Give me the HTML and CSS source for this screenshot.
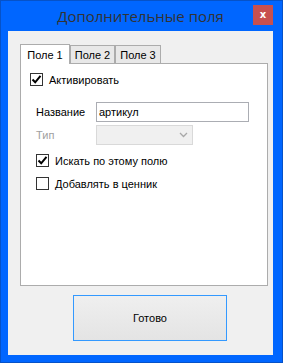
FILE: index.html
```html
<!DOCTYPE html>
<html lang="ru">
<head>
    <meta charset="UTF-8">
    <title>Дополнительные поля</title>
    <link rel="stylesheet" href="styles.css">
</head>
<body>

<div class="window">
    <div class="titlebar">
        <span></span>
        <div class="title">Дополнительные поля</div>
        <button class="close">x</button>
    </div>

    <div class="client">
        <!-- Вкладки -->
        <div class="tabs">
            <div class="tab active">Поле 1</div>
            <div class="tab">Поле 2</div>
            <div class="tab">Поле 3</div>
        </div>

        <div class="panel">
            <label class="check first">
                <span class="box"><svg width="11" height="11" viewBox="0 0 11 11"><path d="M1.5 5.5 L4.2 8.3 L9.5 1.8" fill="none" stroke="#000" stroke-width="2"/></svg></span>
                Активировать
            </label>

            <div class="field name-field">
                <span class="label">Название</span>
                <input class="text" type="text" value="артикул">
            </div>

            <div class="field type-field">
                <span class="label disabled">Тип</span>
                <div class="select">
                    <svg width="9" height="6" viewBox="0 0 9 6"><path d="M1 1 L4.5 4.5 L8 1" fill="none" stroke="#a8a8a8" stroke-width="1.3"/></svg>
                </div>
            </div>

            <label class="check search">
                <span class="box"><svg width="11" height="11" viewBox="0 0 11 11"><path d="M1.5 5.5 L4.2 8.3 L9.5 1.8" fill="none" stroke="#000" stroke-width="2"/></svg></span>
                Искать по этому полю
            </label>

            <label class="check price">
                <span class="box"></span>
                Добавлять в ценник
            </label>
        </div>

        <div class="footer">
            <button class="btn-done">Готово</button>
        </div>
    </div>
</div>

</body>
</html>
```

FILE: styles.css
```css
body {
    margin: 0;
    padding: 0;
    font-family: "Liberation Sans", Arial, sans-serif;
    font-size: 11px;
    color: #000;
}

.window {
    width: 283px;
    height: 363px;
    box-sizing: border-box;
    display: flex;
    flex-direction: column;
    padding: 0 9px 7px 7px;
    background-color: #0066ff;
    border: 1px solid #0652c8;
}

.titlebar {
    height: 30px;
    display: grid;
    grid-template-columns: 20px 1fr 20px;
    align-items: start;
}

.title {
    text-align: center;
    font-family: "Open Sans", sans-serif;
    font-size: 15px;
    line-height: 30px;
    color: #333;
}

.close {
    width: 20px;
    height: 20px;
    margin-top: 4px;
    padding: 0;
    border: none;
    background-color: #c75050;
    color: white;
    font-family: "DejaVu Sans", sans-serif;
    font-size: 10px;
    font-weight: bold;
    line-height: 18px;
}

.client {
    flex: 1;
    display: flex;
    flex-direction: column;
    padding: 13px 5px 0 12px;
    background-color: #f0f0f0;
}

.tabs {
    display: flex;
    align-items: flex-end;
    height: 20px;
    margin-bottom: -1px;
    position: relative;
    z-index: 1;
}

.tab {
    box-sizing: border-box;
    height: 19px;
    display: flex;
    align-items: center;
    justify-content: center;
    border: 1px solid #acacac;
    background-color: #e8e8e8;
    padding-top: 1px;
}

.tab:nth-child(2) {
    width: 45px;
}

.tab:nth-child(3) {
    width: 46px;
}

.tab.active {
    width: 50px;
    height: 20px;
    border-bottom: none;
    background-color: white;
    padding-top: 0;
}

.panel {
    height: 223px;
    box-sizing: border-box;
    border: 1px solid #acacac;
    background-color: white;
    padding: 9px 0 0 15px;
    display: flex;
    flex-direction: column;
}

.check {
    display: flex;
    align-items: center;
    height: 13px;
    gap: 6px;
}

.check.first {
    margin-left: -6px;
}

.check.search {
    margin-top: 9px;
}

.check.price {
    margin-top: 10px;
}

.box {
    width: 13px;
    height: 13px;
    box-sizing: border-box;
    border: 1px solid #333;
    background-color: white;
    display: flex;
    align-items: center;
    justify-content: center;
}

.field {
    display: flex;
    align-items: center;
    height: 20px;
}

.name-field {
    margin-top: 16px;
}

.type-field {
    margin-top: 3px;
}

.label {
    width: 60px;
}

.label.disabled {
    color: #a0a0a0;
}

.text {
    width: 153px;
    height: 20px;
    box-sizing: border-box;
    border: 1px solid #abadb3;
    padding: 0 2px;
    margin: 0;
    font-family: "Liberation Sans", Arial, sans-serif;
    font-size: 11px;
    color: #000;
    outline: none;
}

.select {
    width: 97px;
    height: 20px;
    box-sizing: border-box;
    border: 1px solid #d9d9d9;
    background-color: #f0f0f0;
    display: flex;
    align-items: center;
    justify-content: flex-end;
    padding-right: 4px;
}

.footer {
    padding: 9px 0 0 53px;
}

.btn-done {
    width: 154px;
    height: 46px;
    border: 1px solid #3399ff;
    background: linear-gradient(#efefef, #e4e4e4);
    font-family: "Liberation Sans", Arial, sans-serif;
    font-size: 11px;
    color: #000;
    padding: 0;
}
```
